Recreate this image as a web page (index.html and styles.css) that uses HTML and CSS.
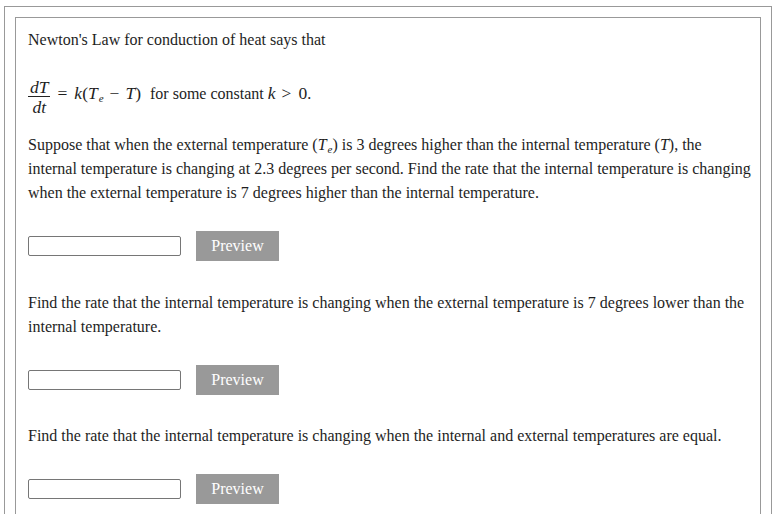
FILE: index.html
```html
<!DOCTYPE html>
<html>
<head>
<meta charset="utf-8">
<link rel="stylesheet" href="styles.css">
</head>
<body>
<div class="outer">
  <div class="inner">
    <p class="text">Newton's Law for conduction of heat says that</p>
    <div class="math">
      <span class="frac"><span class="num"><i>dT</i></span><span class="den"><i>dt</i></span></span><span class="mx"><span class="eq">=</span><i>k</i>(<i>T</i><span class="sub">e</span><span class="minus">−</span><i>T</i>)</span><span class="gap"></span>for some constant <span class="mx"><i>k</i><span class="gt">&gt;</span>0</span>.
    </div>
    <p class="text">Suppose that when the external temperature (<i>T</i><span class="sub">e</span>) is 3 degrees higher than the internal temperature (<i>T</i>), the internal temperature is changing at 2.3 degrees per second. Find the rate that the internal temperature is changing when the external temperature is 7 degrees higher than the internal temperature.</p>
    <div class="answer">
      <input class="field" type="text">
      <button class="preview" type="button">Preview</button>
    </div>
    <p class="text">Find the rate that the internal temperature is changing when the external temperature is 7 degrees lower than the internal temperature.</p>
    <div class="answer">
      <input class="field" type="text">
      <button class="preview" type="button">Preview</button>
    </div>
    <p class="text">Find the rate that the internal temperature is changing when the internal and external temperatures are equal.</p>
    <div class="answer">
      <input class="field" type="text">
      <button class="preview" type="button">Preview</button>
    </div>
  </div>
</div>
</body>
</html>
```
FILE: styles.css
```css
html, body {
  margin: 0;
  padding: 0;
  background: #fff;
}
body {
  font-family: "Liberation Serif", "Times New Roman", serif;
  font-size: 16px;
  color: #1e1e1e;
}
.outer {
  margin: 6px 3px 0 4px;
  border: 1px solid #999;
  padding: 10px 10px 0 10px;
}
.inner {
  border: 1px solid #999;
  padding: 10px 6px 40px 12px;
  line-height: 24px;
}
.text {
  margin: 0;
}
.math {
  margin: 27px 0 18px;
  line-height: 24px;
}
.mx {
  font-size: 17.5px;
}
.frac {
  display: inline-flex;
  flex-direction: column;
  vertical-align: 6px;
  text-align: center;
  font-size: 17.5px;
}
.num {
  line-height: 16px;
  padding: 0 2px 1px;
  border-bottom: 1px solid #222;
}
.den {
  line-height: 16px;
  padding-top: 2px;
}
.eq {
  margin: 0 7px 0 7px;
}
.minus {
  margin: 0 6px 0 6px;
}
.gap {
  display: inline-block;
  width: 9px;
}
.gt {
  margin: 0 7px 0 6px;
}
.sub {
  font-size: 11px;
  font-style: italic;
  line-height: 0;
  vertical-align: -3px;
  margin-left: 1px;
}
.answer {
  display: flex;
  align-items: center;
  gap: 15px;
  margin: 26px 0 29.5px;
}
.field {
  box-sizing: border-box;
  width: 153px;
  height: 20px;
  margin: 0;
  border: 1px solid #767676;
  border-radius: 2px;
  background: #fff;
  padding: 0 2px;
}
.preview {
  box-sizing: border-box;
  width: 83px;
  height: 30px;
  margin: 0;
  border: none;
  background: #999;
  color: #fff;
  font-family: "Liberation Serif", "Times New Roman", serif;
  font-size: 16px;
  padding: 0;
}
```
